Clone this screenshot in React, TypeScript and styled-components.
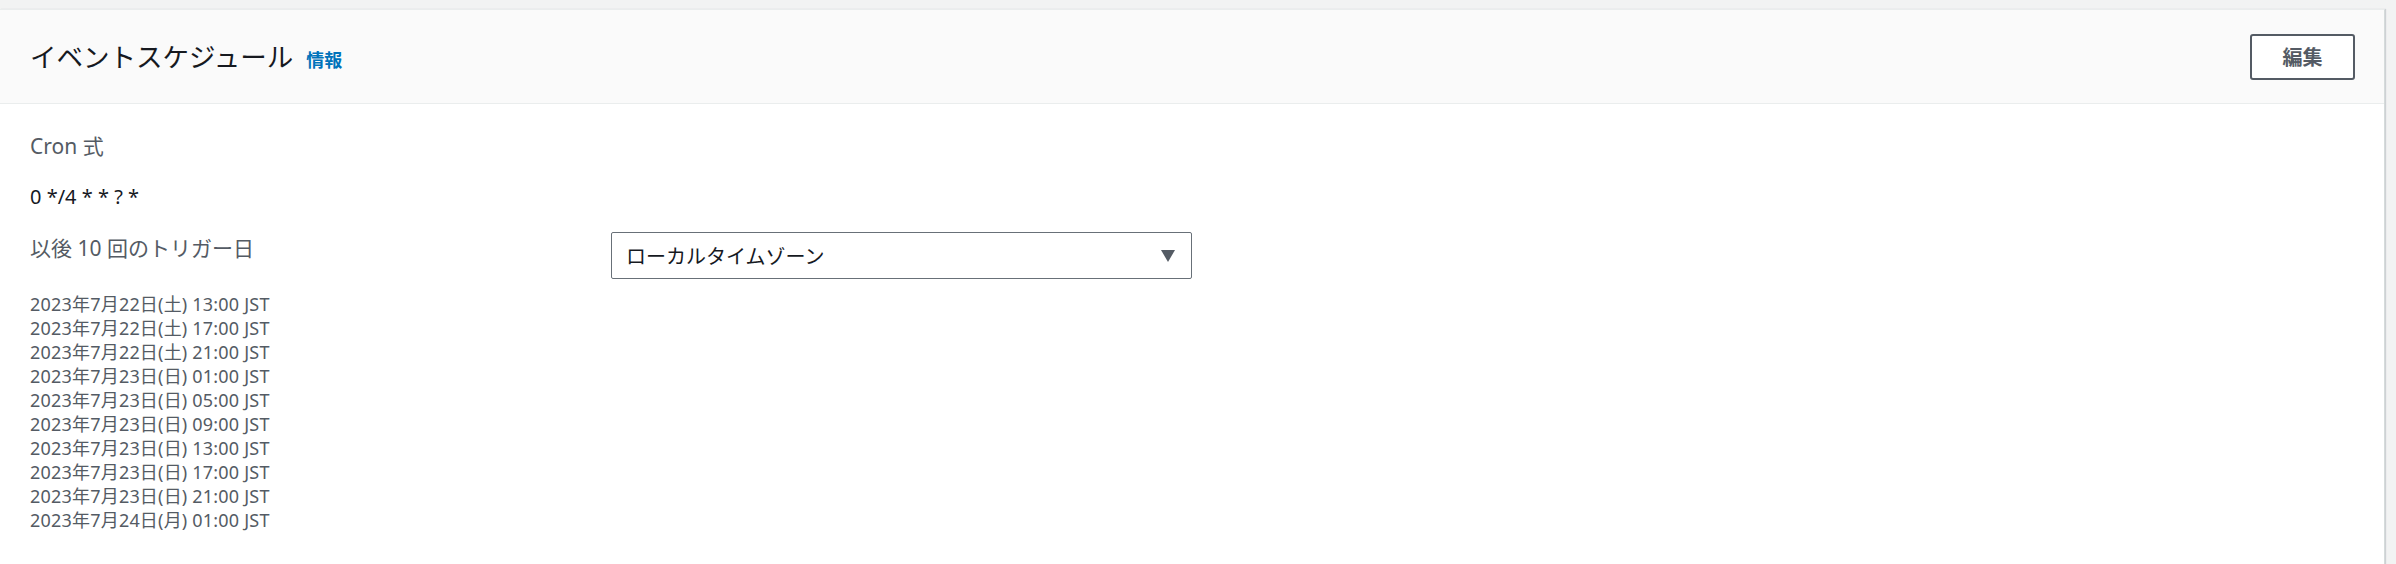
import React from "react";
import styled, { createGlobalStyle } from "styled-components";

const GlobalStyle = createGlobalStyle`
  html, body {
    margin: 0;
    padding: 0;
    background: #f2f3f3;
  }
  body {
    font-family: "Noto Sans", "Noto Sans CJK JP", sans-serif;
    color: #16191f;
  }
`;

const Page = styled.div`
  padding: 9px 11px 0 0;
  min-height: 564px;
  box-sizing: border-box;
`;

const Panel = styled.section`
  background: #ffffff;
  border-top: 1px solid #eaeded;
  border-right: 1px solid #d5dbdb;
  box-shadow: 1px 0 1px rgba(0, 22, 40, 0.15);
  min-height: 555px;
  box-sizing: border-box;
`;

const Header = styled.header`
  height: 94px;
  box-sizing: border-box;
  background: #fafafa;
  border-bottom: 1px solid #eaeded;
  display: flex;
  align-items: center;
  justify-content: space-between;
  padding: 0 29px 0 30px;
`;

const TitleGroup = styled.div`
  display: flex;
  align-items: baseline;
  gap: 13px;
`;

const Title = styled.h2`
  margin: 0;
  font-size: 26.5px;
  font-weight: 400;
  line-height: 36px;
  color: #16191f;
`;

const InfoLink = styled.a`
  font-size: 18px;
  font-weight: 700;
  color: #0073bb;
  text-decoration: none;
  cursor: pointer;
`;

const EditButton = styled.button`
  width: 105px;
  height: 46px;
  box-sizing: border-box;
  background: #ffffff;
  border: 2px solid #545b64;
  border-radius: 3px;
  font-family: inherit;
  font-size: 20px;
  font-weight: 700;
  color: #545b64;
  cursor: pointer;
  padding: 0;
`;

const Body = styled.div`
  padding: 27px 30px 30px;
`;

const Label = styled.div`
  font-size: 21px;
  line-height: 30px;
  color: #545b64;
`;

const Value = styled.div`
  font-size: 20px;
  line-height: 30px;
  color: #16191f;
  margin-top: 21px;
`;

const TriggerRow = styled.div`
  display: flex;
  align-items: flex-start;
  margin-top: 20px;
`;

const TriggerLabel = styled(Label)`
  width: 581px;
  margin-top: 1px;
`;

const Select = styled.div`
  width: 581px;
  height: 47px;
  box-sizing: border-box;
  border: 1px solid #687078;
  border-radius: 2px;
  display: flex;
  align-items: center;
  justify-content: space-between;
  padding: 0 16px 0 14px;
  font-size: 20px;
  color: #16191f;
  background: #ffffff;
`;

const Arrow = styled.svg`
  width: 14px;
  height: 12px;
  display: block;
`;

const DateList = styled.ul`
  list-style: none;
  margin: 13px 0 0;
  padding: 0;
`;

const DateItem = styled.li`
  font-size: 18px;
  letter-spacing: 0.2px;
  line-height: 24px;
  color: #545b64;
`;

const dates = [
  "2023年7月22日(土) 13:00 JST",
  "2023年7月22日(土) 17:00 JST",
  "2023年7月22日(土) 21:00 JST",
  "2023年7月23日(日) 01:00 JST",
  "2023年7月23日(日) 05:00 JST",
  "2023年7月23日(日) 09:00 JST",
  "2023年7月23日(日) 13:00 JST",
  "2023年7月23日(日) 17:00 JST",
  "2023年7月23日(日) 21:00 JST",
  "2023年7月24日(月) 01:00 JST",
];

export default function App() {
  return (
    <>
      <GlobalStyle />
      <Page>
        <Panel>
          <Header>
            <TitleGroup>
              <Title>イベントスケジュール</Title>
              <InfoLink>情報</InfoLink>
            </TitleGroup>
            <EditButton>編集</EditButton>
          </Header>
          <Body>
            <Label>Cron 式</Label>
            <Value>0 */4 * * ? *</Value>
            <TriggerRow>
              <TriggerLabel>以後 10 回のトリガー日</TriggerLabel>
              <Select>
                <span>ローカルタイムゾーン</span>
                <Arrow viewBox="0 0 14 12">
                  <path d="M0 0 H14 L7 12 Z" fill="#545b64" />
                </Arrow>
              </Select>
            </TriggerRow>
            <DateList>
              {dates.map((d) => (
                <DateItem key={d}>{d}</DateItem>
              ))}
            </DateList>
          </Body>
        </Panel>
      </Page>
    </>
  );
}
